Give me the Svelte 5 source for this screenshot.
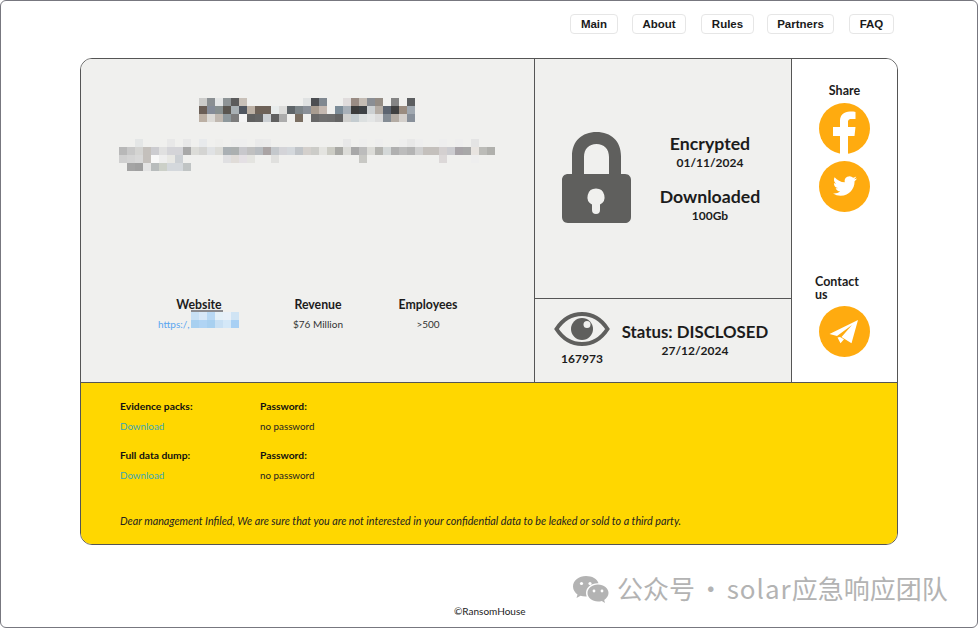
<script>
  const f = 'f0f0ee';
  const title = [
    ['ccccca','8a8f92','e4e6e6','8e9496','5c5c5c','c8c0b8',f,f,f,f,f,f,f,'e0e2e2','4c4e52','808890',f,f,'e0dcdc','9a8c84','c4bcb4','8a8e94','948c84',f,'848484',f,'5c5e60'],
    ['6a5e56','858c98','889090','5a5650','a8b0b4','505660','bcb0a4','6e6258','6e6258','e8ecec','dcdcda','5e6468','7c8488','8a9098','a89c90','c4b8b0',f,'7c8c98','a8b0b8','3c3c3c','3e4246','ccd0d2','b4aca4','5c6470','404040','9a8c80','a0a8b0'],
    ['bcb0a4','dcdad6','c0b8b0','8e989c','7c7c7c','f4f4f4','606060','646464','ccd0d4','606060','acacac',f,'7a6e62',f,'686868','707070','6e6e6e','646464','d0d0ce','c4ccd0','dce0e0','e4e6e6','dcdcdc','848c94','b4aca4','d4d0cc','88909a']
  ];
  const sub = [
    [f,f,'e4e6e6',f,f,f,'e8e8e8',f,'e8e8e8',f,'e8eaec',f,'eeeeec',f,'eeeeee','eeeeee',f,'eaeaea','ebebeb',f,f,f,f,f,f,f,f,f,'e8e8e8',f,'eeeeee',f,'eeeeee',f,f,'eeeeee','e8e8e8','eeeeee',f,f,'eeeeee',f,'eeeeee',f,'e4e4e4',f,f],
    ['b8b8b8','c8c8c8','d4d4d2','c4c0bc','ccccd0','e0e0e0','d4d4d8','d4d4d8','a8a8a8','dcdcd8','d4d4d2','e0e2e4','dcdcd8','aab0b4','acb0b0','c8c8cc','c0c0c0','b8bcc0','aaa4a4','c4c8cc','d4d4d8','d4d8dc','c0c4c8','d4d0cc','ccccc8','e4e4e0','ccccc4','a8a8a4','dcdcd8','a8a8a8','bcbcbc','dcdcd8','b4b4b0','d4d8d8','b0b0b0','bcbcbc','b4b4b4','d0d0d0','c4c0bc','c4c0bc','d4d0d0','ccccd0','a8a4a8','a8a8a8','e8e4e0','bcbcb8','b0b0ac'],
    ['d0d0d0','d4d4d4','d8d8d8','c4c0bc','f8f8f8','eeeeee','e8e8e4','ccd0d4',f,f,f,f,f,'e0e0e2','e0dcd8','e4e0e4','e4e4e0',f,f,'e0e0de',f,f,f,f,f,f,f,f,f,f,'c8c8c4',f,f,f,f,f,f,f,f,f,'dcd8d8',f,f,f,'eeeeee',f,f],
    [f,'a4a4a4','a0a0a0','e4e4e4','b8bcbc','ccd0c8','d4d8dc','d4d8dc','c0c4c4']
  ];
  const site = [
    ['c8e0f4','d8e8f8','b8d8f4','e4f0f8','e8f0f8','d0e4f4'],
    ['a8d0f0','b0d4f4','a8d0f0','c8e0f4','d4e8f8','a8d0f4']
  ];
  const nav = [['Main', 48, 14], ['About', 54, 15], ['Rules', 53, 13], ['Partners', 67, 15], ['FAQ', 45, 0]];
  const packs = [['Evidence packs:'], ['Full data dump:']];
</script>

{#snippet mosaic(rows)}
  {#each rows as row}
    <div class="mrow">
      {#each row as c}<span class="cell" style="background:#{c}"></span>{/each}
    </div>
  {/each}
{/snippet}

<div class="page">
  <nav class="nav">
    {#each nav as n}<a class="navlink" href="#top" style="width:{n[1]}px;margin-right:{n[2]}px">{n[0]}</a>{/each}
  </nav>

  <main class="card">
    <div class="top">
      <section class="info">
        <div class="mosaic title">{@render mosaic(title)}</div>
        <div class="mosaic sub">{@render mosaic(sub)}</div>
        <div class="facts">
          <div class="fact website">
            <h4>Website</h4>
            <div class="url"><a href="#top">https:/,</a><div class="sitemask"><div class="maskline"></div>{@render mosaic(site)}</div></div>
          </div>
          <div class="fact revenue"><h4>Revenue</h4><p>$76 Million</p></div>
          <div class="fact employees"><h4>Employees</h4><p>&gt;500</p></div>
        </div>
      </section>

      <section class="middle">
        <div class="dates">
          <svg class="lock" viewBox="0 0 70 92" width="70" height="92">
            <path fill="#5f5f5d" fill-rule="evenodd" d="M10 42V24C10 9 20 0 34.500 0S59 9 59 24V42h4c4 0 6 3 6 6v37c0 4-3 6-6 6H6c-4 0-6-3-6-6V48c0-4 3-6 6-6zM22 42h25V25c0-8-5-13-12.500-13S22 17 22 25zM34 56.500a8.500 8.500 0 0 0-4 16V78a4 4 0 0 0 8 0v-5.500a8.500 8.500 0 0 0-4-16z"/>
          </svg>
          <div class="datetext">
            <h3>Encrypted</h3><b>01/11/2024</b>
            <h3 class="second">Downloaded</h3><b>100Gb</b>
          </div>
        </div>
        <div class="status">
          <div class="views">
            <svg viewBox="0 0 56 36" width="56" height="36">
              <path fill="none" stroke="#5f5f5d" stroke-width="4" d="M2.500 17C9 7 18 2 28 2S47 7 53.500 17C47 27 38 32 28 32S9 27 2.500 17z"/>
              <circle cx="28" cy="17" r="11" fill="#5f5f5d"/>
              <circle cx="33" cy="12.500" r="3.500" fill="#f0f0ee"/>
            </svg>
            <b>167973</b>
          </div>
          <div class="statustext">
            <h3>Status: DISCLOSED</h3><b>27/12/2024</b>
          </div>
        </div>
      </section>

      <aside class="share">
        <div class="sharetop">
          <h5>Share</h5>
          <svg class="social" viewBox="0 0 51 51" width="51" height="51">
            <circle cx="25.500" cy="25.500" r="25.500" fill="#ffab0f"/>
            <path fill="#fff" d="M21 51V33h-7v-9h7v-6C21 12 25 8.500 31 8.500c2.500 0 4.500.2 5.500.4V16h-4c-3 0-3.500 1.500-3.500 3.500V24h7.500l-1 9H29v18z"/>
          </svg>
          <svg class="social" viewBox="0 0 51 51" width="51" height="51">
            <circle cx="25.500" cy="25.500" r="25.500" fill="#ffab0f"/>
            <g transform="translate(14 13)">
              <path fill="#fff" d="M23.953 4.570a10 10 0 01-2.825.775 4.958 4.958 0 002.163-2.723c-.951.555-2.005.959-3.127 1.184a4.920 4.920 0 00-8.384 4.482C7.690 8.095 4.067 6.130 1.640 3.162a4.822 4.822 0 00-.666 2.475c0 1.710.870 3.213 2.188 4.096a4.904 4.904 0 01-2.228-.616v.060a4.923 4.923 0 003.946 4.827 4.996 4.996 0 01-2.212.085 4.936 4.936 0 004.604 3.417 9.867 9.867 0 01-6.102 2.105c-.390 0-.779-.023-1.170-.067a13.995 13.995 0 007.557 2.209c9.053 0 13.998-7.496 13.998-13.985 0-.210 0-.420-.015-.630A9.935 9.935 0 0024 4.590z"/>
            </g>
          </svg>
        </div>
        <div class="contact">
          <h5>Contact<br />us</h5>
          <svg class="social" viewBox="0 0 51 51" width="51" height="51">
            <circle cx="25.500" cy="25.500" r="25.500" fill="#ffab0f"/>
            <path fill="#fff" d="M10.500 28L39 14 32.500 37.300 22.500 31 33 19 18 30zM18.500 31.500L21.500 37.300 25 33.200 21 31z"/>
          </svg>
        </div>
      </aside>
    </div>

    <section class="yellow">
      <div class="packs">
        {#each packs as p}
          <div class="pack">
            <b>{p[0]}</b><b>Password:</b>
            <a href="#top">Download</a><span>no password</span>
          </div>
        {/each}
      </div>
      <p class="dear">Dear management Infiled, We are sure that you are not interested in your confidential data to be leaked or sold to a third party.</p>
    </section>
  </main>

  <footer class="footer">
    <span class="copy">©RansomHouse</span>
    <div class="mark">
      <svg viewBox="0 0 36 30" width="36" height="30">
        <path fill="#b3b3b3" d="M13 1C6 1 0 5.500 0 11.500c0 3.500 2 6 4.500 8L3.500 23l4-2.200c1.500.5 3.200.7 5 .7h1.200c-.4-1.100-.7-2.300-.7-3.500 0-5.500 5.300-9.700 11.500-9.700h1C24.300 3.800 19 1 13 1z"/>
        <path fill="#b3b3b3" d="M25 9.500c-5.800 0-10.500 3.800-10.500 8.500s4.700 8.500 10.500 8.500c1.400 0 2.600-.2 3.800-.6l3.200 2.100-.8-3.100c2.600-1.700 4.300-4.200 4.300-6.900 0-4.700-4.700-8.500-10.500-8.500z"/>
        <circle cx="8.500" cy="8.500" r="1.600" fill="#fff"/><circle cx="17" cy="8.500" r="1.600" fill="#fff"/>
        <circle cx="21" cy="16" r="1.400" fill="#fff"/><circle cx="29" cy="16" r="1.400" fill="#fff"/>
      </svg>
      <span class="marktext">公众号 · <span class="latin">solar</span>应急响应团队</span>
    </div>
  </footer>
</div>

<style>
  :global(body) { margin: 0; background: #fff; }
  :global(html) { overflow: hidden; }
  * { box-sizing: border-box; }
  .page {
    width: 978px; height: 628px; background: #fff; overflow: hidden;
    border: 1px solid #77777f; border-radius: 6px;
    font-family: Lato, sans-serif; color: #1c1c1c;
    display: flex; flex-direction: column; align-items: flex-start;
  }
  h3, h4, h5, p { margin: 0; }
  a { text-decoration: none; color: #5aa5f0; }

  .nav { display: flex; align-self: flex-end; margin: 13px 83px 0 0; height: 20px; }
  .navlink {
    font: bold 11.500px "Liberation Sans", sans-serif; color: #1a1a1a;
    border: 1px solid #e6e6e6; border-radius: 4px; height: 20px; line-height: 18px;
    text-align: center; flex: none;
  }

  .card {
    width: 818px; height: 487px; margin: 24px 0 0 79px;
    border: 1px solid #555; border-radius: 12px; overflow: hidden;
    display: flex; flex-direction: column;
  }
  .top { display: flex; height: 324px; border-bottom: 1px solid #555; flex: none; }

  .info { width: 454px; background: #f0f0ee; border-right: 1px solid #555; padding-top: 39px; display: flex; flex-direction: column; }
  .mosaic { flex: none; }
  .mrow { display: flex; height: 8px; }
  .cell { display: block; width: 8px; height: 8px; flex: none; }
  .title { margin-left: 118px; }
  .sub { margin: 17px 0 0 38px; }
  .facts { display: flex; margin-top: 126px; height: 40px; position: relative; }
  .fact { text-align: center; font-size: 10px; }
  .fact h4 { font-size: 12.300px; line-height: 16px; font-weight: 700; }
  .fact p { margin-top: 4px; line-height: 14px; color: #333; }
  .website { width: 90px; margin-left: 73px; }
  .revenue { width: 70px; margin-left: 39px; }
  .employees { width: 70px; margin-left: 40px; }
  .url { display: flex; justify-content: flex-start; margin-top: 4px; line-height: 14px; }
  .url a { width: 37px; padding-left: 4px; text-align: left; }
  .sitemask { margin-top: -7px; }
  .maskline { width: 32px; height: 2px; background: #8a8a8e; }

  .middle { width: 257px; background: #f0f0ee; border-right: 1px solid #555; display: flex; flex-direction: column; }
  .dates { height: 240px; border-bottom: 1px solid #555; display: flex; padding: 73px 0 0 27px; }
  .lock { flex: none; }
  .datetext { width: 130px; margin-left: 13px; padding-top: 1px; text-align: center; font-size: 12px; display: flex; flex-direction: column; align-items: center; }
  .datetext h3 { font-size: 17.700px; line-height: 22px; font-weight: 700; }
  .datetext b { line-height: 15px; }
  .datetext .second { margin-top: 16px; }
  .status { flex: 1; display: flex; }
  .views { width: 76px; padding: 13px 0 0 18px; display: flex; flex-direction: column; align-items: center; font-size: 12px; }
  .views svg { flex: none; }
  .views b { line-height: 14px; margin-top: 4px; }
  .statustext { width: 168px; text-align: center; padding-top: 22px; font-size: 12px; display: flex; flex-direction: column; align-items: center; }
  .statustext h3 { font-size: 16.800px; line-height: 22px; font-weight: 700; }
  .statustext b { line-height: 15px; }

  .share { flex: 1; background: #fff; display: flex; flex-direction: column; align-items: center; }
  .share h5 { font-size: 12.500px; line-height: 13px; font-weight: 700; }
  .sharetop { padding-top: 25px; display: flex; flex-direction: column; align-items: center; }
  .sharetop h5 { margin-bottom: 6px; }
  .sharetop .social + .social { margin-top: 7px; }
  .social { display: block; flex: none; }
  .contact { margin-top: 63px; width: 100%; display: flex; flex-direction: column; align-items: center; }
  .contact h5 { align-self: flex-start; margin-left: 23px; margin-bottom: 5px; }

  .yellow { flex: 1; background: #ffd700; padding: 15px 0 0 39px; font-size: 9.800px; color: #222; display: flex; flex-direction: column; }
  .pack { display: grid; grid-template-columns: 140px 140px; grid-auto-rows: 16px; row-gap: 4px; height: 36px; margin-bottom: 13px; align-items: center; }
  .pack b { color: #111; font-size: 10.300px; }
  .yellow a { color: #3ba7b5; }
  .dear { margin-top: 18px; font-size: 10.750px; font-style: italic; line-height: 14px; color: #222; }

  .footer { flex: 1; width: 100%; position: relative; }
  .copy { position: absolute; left: 453px; top: 60px; font-size: 10px; line-height: 12px; color: #222; }
  .mark { position: absolute; left: 572px; top: 30px; display: flex; align-items: center; gap: 8px; color: #b3b3b3; font-family: "Noto Sans CJK SC", "Noto Sans", sans-serif; font-size: 26px; line-height: 30px; white-space: nowrap; }
  .marktext { margin-top: -4px; word-spacing: -3px; }
  .latin { letter-spacing: 1px; }
</style>
